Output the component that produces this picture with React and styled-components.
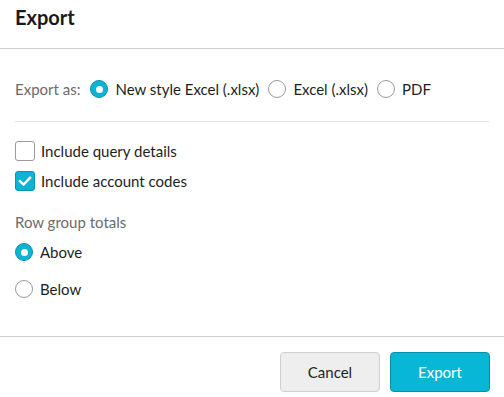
import React, { useState } from "react";
import styled, { createGlobalStyle, css } from "styled-components";

const Global = createGlobalStyle`
  html, body { margin: 0; padding: 0; background: #fff; }
  body { font-family: Lato, "Open Sans", sans-serif; color: #222; }
  * { box-sizing: border-box; }
`;

const Dialog = styled.div`
  width: 504px;
  height: 397px;
  display: flex;
  flex-direction: column;
  background: #fff;
`;

const Header = styled.div`
  height: 49px;
  padding: 5px 15px 0;
  border-bottom: 1px solid #cfcfcf;
`;

const Title = styled.h1`
  margin: 0;
  font-size: 20px;
  line-height: 24px;
  font-weight: 700;
  color: #1a1a1a;
`;

const Body = styled.div`
  flex: 1;
  padding: 23px 15px 0;
  display: flex;
  flex-direction: column;
`;

const Row = styled.div`
  display: flex;
  align-items: center;
  height: ${(p) => p.$h || 30}px;
  margin-top: ${(p) => p.$mt || 0}px;
  font-size: 15px;
`;

const Label = styled.span`
  color: #6b6b6b;
  font-size: 15px;
  margin-right: ${(p) => p.$mr || 0}px;
`;

const Divider = styled.div`
  height: 1px;
  background: #e2e2e2;
  margin-top: 15px;
`;

const Option = styled.label`
  display: inline-flex;
  align-items: center;
  gap: 7px;
  margin-right: 9px;
  cursor: pointer;
  color: #1e1e1e;
`;

const Radio = styled.span`
  width: 18px;
  height: 18px;
  border-radius: 50%;
  flex: none;
  display: inline-flex;
  align-items: center;
  justify-content: center;
  ${(p) =>
    p.$on
      ? css`
          background: #0cb4d4;
          border: 1px solid #0a94ae;
          &::after {
            content: "";
            width: 7px;
            height: 7px;
            border-radius: 50%;
            background: #fff;
          }
        `
      : css`
          background: #fff;
          border: 1px solid #9a9a9a;
        `}
`;

const Box = styled.span`
  width: 20px;
  height: 20px;
  border-radius: 3px;
  flex: none;
  display: inline-flex;
  align-items: center;
  justify-content: center;
  ${(p) =>
    p.$on
      ? css`
          background: #0cb4d4;
          border: 1px solid #0a94ae;
        `
      : css`
          background: #fff;
          border: 1px solid #9a9a9a;
        `}
`;

const CheckOption = styled.label`
  display: inline-flex;
  align-items: center;
  gap: 6px;
  cursor: pointer;
  color: #1e1e1e;
`;

const Footer = styled.div`
  border-top: 1px solid #cfcfcf;
  padding: 15px 14px 0 0;
  height: 61px;
  display: flex;
  justify-content: flex-end;
  gap: 10px;
`;

const Button = styled.button`
  width: 100px;
  height: 40px;
  border-radius: 4px;
  font-family: Lato, "Open Sans", sans-serif;
  font-size: 15px;
  cursor: pointer;
  ${(p) =>
    p.$primary
      ? css`
          background: #08b6d6;
          border: 1px solid #0790a9;
          color: #fff;
        `
      : css`
          background: #eeeeee;
          border: 1px solid #cfcfcf;
          color: #1e1e1e;
        `}
`;

const Check = () => (
  <svg width="14" height="14" viewBox="0 0 14 14">
    <path d="M2 7.2 L5.6 10.6 L12 3.8" fill="none" stroke="#fff" strokeWidth="2.4" strokeLinecap="square" />
  </svg>
);

export default function App() {
  const [fmt, setFmt] = useState("new");
  const [q, setQ] = useState(false);
  const [acc, setAcc] = useState(true);
  const [tot, setTot] = useState("above");
  return (
    <Dialog>
      <Global />
      <Header>
        <Title>Export</Title>
      </Header>
      <Body>
        <Row $h={34}>
          <Label $mr={10}>Export as:</Label>
          <Option onClick={() => setFmt("new")}>
            <Radio $on={fmt === "new"} />
            New style Excel (.xlsx)
          </Option>
          <Option onClick={() => setFmt("xlsx")}>
            <Radio $on={fmt === "xlsx"} />
            Excel (.xlsx)
          </Option>
          <Option onClick={() => setFmt("pdf")}>
            <Radio $on={fmt === "pdf"} />
            PDF
          </Option>
        </Row>
        <Divider />
        <Row $mt={14}>
          <CheckOption onClick={() => setQ(!q)}>
            <Box $on={q}>{q && <Check />}</Box>
            Include query details
          </CheckOption>
        </Row>
        <Row>
          <CheckOption onClick={() => setAcc(!acc)}>
            <Box $on={acc}>{acc && <Check />}</Box>
            Include account codes
          </CheckOption>
        </Row>
        <Row $h={24} $mt={14}>
          <Label>Row group totals</Label>
        </Row>
        <Row $h={36}>
          <Option onClick={() => setTot("above")}>
            <Radio $on={tot === "above"} />
            Above
          </Option>
        </Row>
        <Row $h={36} $mt={1}>
          <Option onClick={() => setTot("below")}>
            <Radio $on={tot === "below"} />
            Below
          </Option>
        </Row>
      </Body>
      <Footer>
        <Button>Cancel</Button>
        <Button $primary>Export</Button>
      </Footer>
    </Dialog>
  );
}
